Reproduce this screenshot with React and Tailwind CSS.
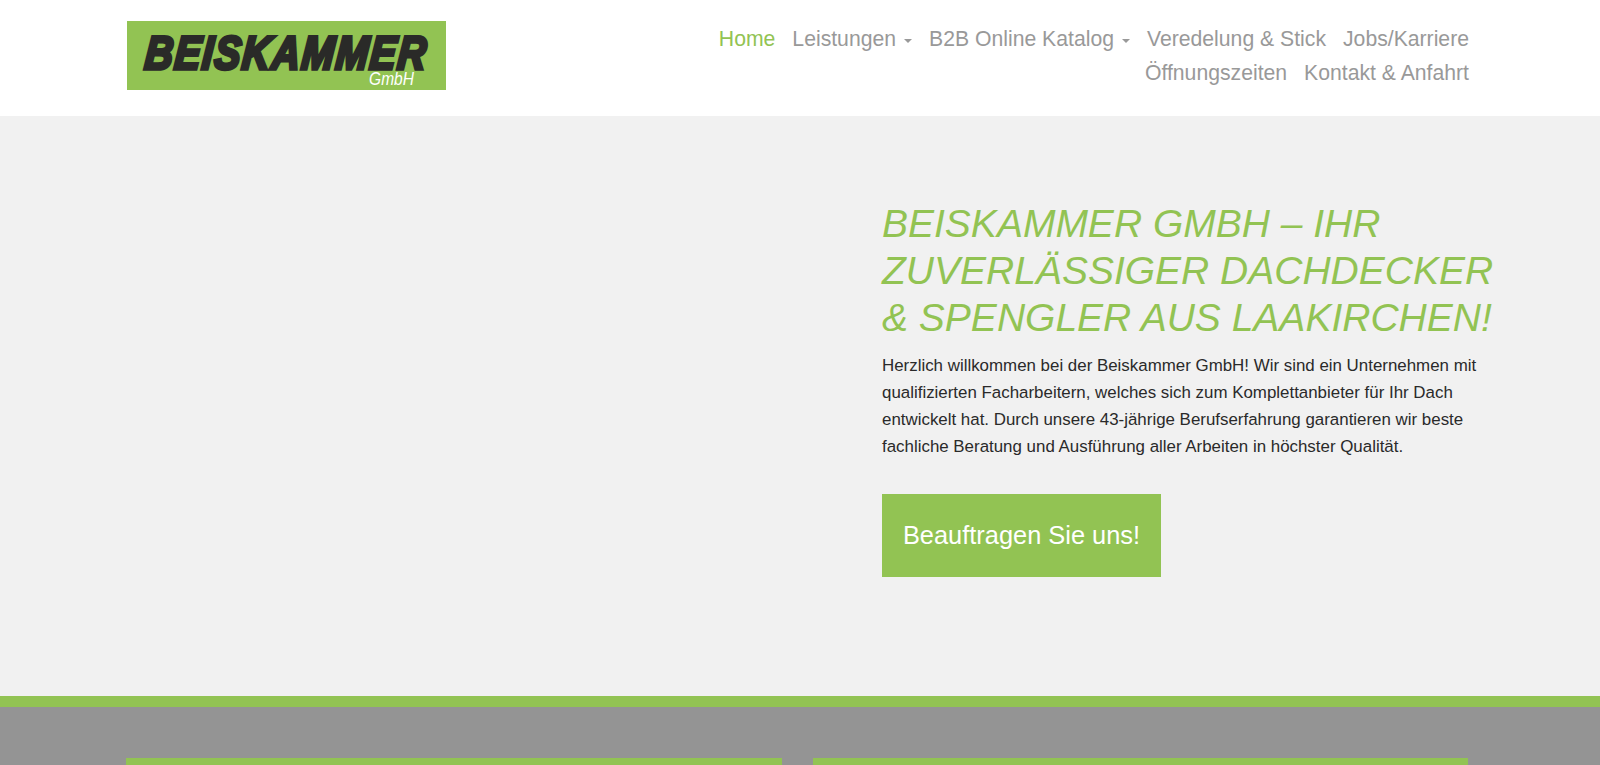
const navTop = [
  { label: "Home", active: true },
  { label: "Leistungen", caret: true },
  { label: "B2B Online Katalog", caret: true },
  { label: "Veredelung & Stick" },
  { label: "Jobs/Karriere" },
];
const navBottom = [{ label: "Öffnungszeiten" }, { label: "Kontakt & Anfahrt" }];

function NavItem({ item }) {
  return (
    <a href="#" className={`flex items-center ${item.active ? "text-[#92c353]" : "text-[#999999]"}`}>
      {item.label}
      {item.caret && (
        <span className="ml-2 mt-[3px] h-0 w-0 border-x-4 border-t-4 border-x-transparent border-t-[#999999]" />
      )}
    </a>
  );
}

function Logo() {
  return (
    <div className="flex h-[69px] w-[319px] flex-col items-center bg-[#92c353]">
      <span className="mt-[14px] ml-[-1px] h-[36px] -skew-x-6 scale-y-[1.2] text-[39px] leading-[36px] font-bold tracking-[1.6px] text-[#2a2a28] italic [-webkit-text-stroke:3px_#2a2a28] [paint-order:stroke]">
        BEISKAMMER
      </span>
      <span className="mt-[-1px] ml-[210px] scale-y-[1.15] text-[15.5px] leading-[17px] text-white italic">GmbH</span>
    </div>
  );
}

export default function App() {
  return (
    <div className="flex h-[765px] flex-col overflow-hidden bg-white font-['Liberation_Sans',Arial,sans-serif]">
      <header className="flex h-[116px] shrink-0 justify-between pr-[131px] pl-[127px]">
        <div className="pt-[21px]">
          <Logo />
        </div>
        <nav className="pt-[22px] text-[21.2px] leading-[34px]">
          <div className="flex justify-end gap-[17px]">
            {navTop.map((item) => (
              <NavItem key={item.label} item={item} />
            ))}
          </div>
          <div className="flex justify-end gap-[17px]">
            {navBottom.map((item) => (
              <NavItem key={item.label} item={item} />
            ))}
          </div>
        </nav>
      </header>

      <section className="h-[580px] shrink-0 bg-[#f1f1f1] pt-[84px] pl-[882px]">
        <h1 className="w-[640px] text-[39px] leading-[47px] text-[#92c353] uppercase italic">
          Beiskammer GmbH – Ihr
          <br />
          zuverlässiger Dachdecker
          <br />&amp; Spengler aus Laakirchen!
        </h1>
        <p className="mt-[11px] text-[16.9px] leading-[27px] text-[#2a2a2a]">
          Herzlich willkommen bei der Beiskammer GmbH! Wir sind ein Unternehmen mit
          <br />
          qualifizierten Facharbeitern, welches sich zum Komplettanbieter für Ihr Dach
          <br />
          entwickelt hat. Durch unsere 43-jährige Berufserfahrung garantieren wir beste
          <br />
          fachliche Beratung und Ausführung aller Arbeiten in höchster Qualität.
        </p>
        <a
          href="#"
          className="mt-[34px] flex h-[83px] w-[279px] items-center justify-center bg-[#92c353] text-[25.4px] text-white"
        >
          Beauftragen Sie uns!
        </a>
      </section>

      <div className="h-[11px] shrink-0 bg-[#92c353]" />

      <section className="flex-1 bg-[#949494] pt-[51px] pr-[132px] pl-[126px]">
        <div className="flex gap-[31px]">
          <div className="h-[20px] flex-1 bg-[#92c353]" />
          <div className="h-[20px] flex-1 bg-[#92c353]" />
        </div>
      </section>
    </div>
  );
}
